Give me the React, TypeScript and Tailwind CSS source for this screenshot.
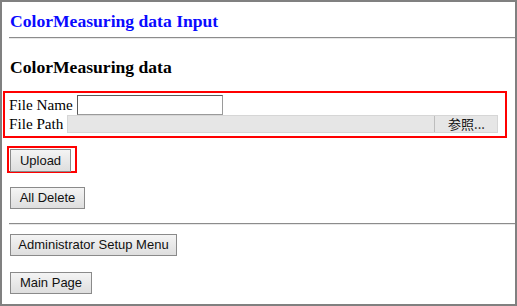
import React from "react";

function Btn({ children, className = "" }: { children: React.ReactNode; className?: string }) {
  return (
    <button
      className={
        "h-[22px] px-0 whitespace-nowrap border border-[#8a8a8a] bg-gradient-to-b from-[#f4f4f4] to-[#dedede] text-[13px] leading-none text-[#111] " +
        className
      }
      style={{ fontFamily: '"Liberation Sans", Arial, sans-serif' }}
    >
      {children}
    </button>
  );
}

export default function App() {
  const serif = { fontFamily: '"Liberation Serif", "Times New Roman", serif' };
  return (
    <div className="w-[517px] h-[306px] border-2 border-[#808080] bg-white box-border overflow-hidden" style={serif}>
      <div className="pl-[8px] pt-[9px] h-[35px]">
        <div className="text-[17.6px] font-bold text-[#0a0aff] leading-[20px]">ColorMeasuring data Input</div>
      </div>
      <div className="ml-[7px] h-[2px] border-t border-t-[#8c8c8c] border-b border-b-[#e8e8e8]"></div>
      <div className="pl-[8px] pt-[18px] h-[52px]">
        <div className="text-[17.6px] font-bold text-black leading-[20px]">ColorMeasuring data</div>
      </div>
      <div className="ml-[1px] w-[504px] h-[47px] border-2 border-[#ff0000] pl-[4px] pt-[1px] text-[15.2px] leading-[18px] text-black">
        <div className="flex items-center h-[21px]">
          <span>File Name</span>
          <div className="ml-[4px] w-[146px] h-[20px] border border-[#5a5a5a] border-b-[#9a9a9a] border-r-[#9a9a9a] bg-white"></div>
        </div>
        <div className="flex items-center h-[18px]">
          <span>File Path</span>
          <div className="ml-[4px] flex h-[18px] w-[431px] bg-[#e6e6e6] border border-[#d6d6d6]">
            <div className="flex-1"></div>
            <div
              className="w-[63px] h-full border-l border-[#bdbdbd] flex items-center justify-center text-[13px] text-[#111]"
              style={{ fontFamily: '"Noto Sans CJK JP", "Liberation Sans", sans-serif' }}
            >
              参照...
            </div>
          </div>
        </div>
      </div>
      <div className="ml-[5px] mt-[8px] w-[70px] h-[27px] border-2 border-[#ff0000] pl-[1px] pt-[0px]">
        <Btn className="w-[61px] h-[23px]">Upload</Btn>
      </div>
      <div className="ml-[8px] mt-[12px]">
        <Btn className="w-[75px]">All Delete</Btn>
      </div>
      <div className="ml-[7px] mt-[14px] h-[2px] border-t border-t-[#8c8c8c] border-b border-b-[#e8e8e8]"></div>
      <div className="ml-[8px] mt-[7px]">
        <Btn className="w-[167px]">Administrator Setup Menu</Btn>
      </div>
      <div className="ml-[8px] mt-[14px]">
        <Btn className="w-[82px]">Main Page</Btn>
      </div>
    </div>
  );
}
